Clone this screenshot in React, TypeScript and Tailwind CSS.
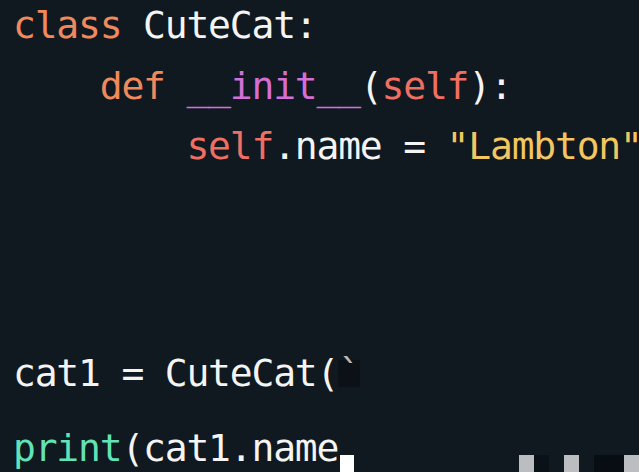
export default function App() {
  const mono = { fontFamily: '"DejaVu Sans Mono", "Liberation Mono", monospace' };

  return (
    <div className="h-[472px] w-[639px] overflow-hidden bg-[#101820] text-[#f4f4f4]" style={mono}>
      <div className="-mt-[5px] pl-[13px] text-[38px] leading-[60.5px] tracking-[-1.2px] whitespace-pre">
        <div>
          <span className="text-[#f08a5d]">class</span> CuteCat:
        </div>
        <div>
          {'    '}
          <span className="text-[#f08a5d]">def</span> <span className="text-[#d36fd6]">__init__</span>(
          <span className="text-[#ef6f62]">self</span>):
        </div>
        <div>
          {'        '}
          <span className="text-[#ef6f62]">self</span>.name = <span className="text-[#f2c660]">"Lambton"</span>
        </div>

        <div className="h-[166px]" />

        <div className="h-[75px]">
          cat1 = CuteCat(<span className="inline-block h-[27px] bg-[#0b1117] leading-[27px] text-[#b8b8b8]">`</span>
        </div>

        <div>
          <div className="float-right mt-[37px] flex h-[17px]">
            <div className="w-[15px] bg-[#bcbdc0]" />
            <div className="w-[15px] bg-[#0b1217]" />
            <div className="w-[15px]" />
            <div className="w-[15px] bg-[#bcbdc0]" />
            <div className="w-[15px]" />
            <div className="w-[30px] bg-[#080d14]" />
            <div className="w-[15px] bg-[#bcbdc0]" />
          </div>
          <span className="text-[#62e3b5]">print</span>(cat1.name
          <span className="ml-[2px] inline-block h-[17px] w-[14px] bg-white align-[-11px]" />
        </div>
      </div>
    </div>
  );
}
